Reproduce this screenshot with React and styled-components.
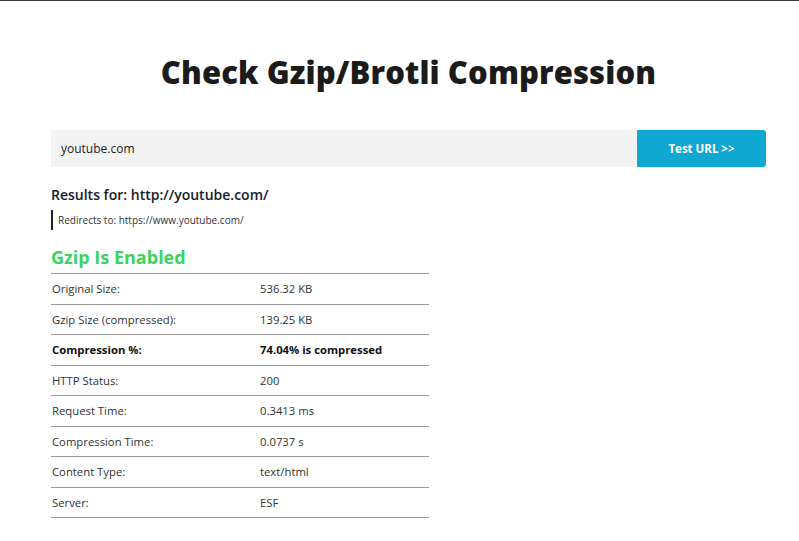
import React from "react";
import styled, { createGlobalStyle } from "styled-components";

const GlobalStyle = createGlobalStyle`
  html, body {
    margin: 0;
    padding: 0;
    background: #fff;
  }
  body {
    font-family: "Open Sans", "Liberation Sans", sans-serif;
    color: #222;
  }
`;

const rows = [
  { label: "Original Size:", value: "536.32 KB" },
  { label: "Gzip Size (compressed):", value: "139.25 KB" },
  { label: "Compression %:", value: "74.04% is compressed", strong: true },
  { label: "HTTP Status:", value: "200" },
  { label: "Request Time:", value: "0.3413 ms" },
  { label: "Compression Time:", value: "0.0737 s" },
  { label: "Content Type:", value: "text/html" },
  { label: "Server:", value: "ESF" },
];

export default function App() {
  return (
    <>
      <GlobalStyle />
      <Page>
        <Title>Check Gzip/Brotli Compression</Title>
        <SearchBar>
          <UrlInput defaultValue="youtube.com" />
          <TestButton>Test URL &gt;&gt;</TestButton>
        </SearchBar>
        <Results>
          <ResultsFor>Results for: http://youtube.com/</ResultsFor>
          <Redirect>Redirects to: https://www.youtube.com/</Redirect>
          <Status>Gzip Is Enabled</Status>
          <Table>
            {rows.map((r) => (
              <Row key={r.label} $strong={r.strong}>
                <Cell>{r.label}</Cell>
                <Cell>{r.value}</Cell>
              </Row>
            ))}
          </Table>
        </Results>
      </Page>
    </>
  );
}

const Page = styled.div`
  border-top: 1px solid #3a3a3a;
  padding: 49px 33px 0 51px;
  box-sizing: border-box;
  width: 799px;
`;

const Title = styled.h1`
  margin: 0 0 35px;
  text-align: center;
  font-size: 31px;
  line-height: 45px;
  font-weight: 800;
  color: #1b1b1b;
  letter-spacing: 0.1px;
`;

const SearchBar = styled.div`
  display: flex;
  height: 37px;
  width: 715px;
`;

const UrlInput = styled.input`
  flex: 1;
  border: none;
  outline: none;
  background: #f3f3f3;
  padding: 0 10px;
  font-family: inherit;
  font-size: 12px;
  color: #222;
`;

const TestButton = styled.button`
  width: 129px;
  border: none;
  border-radius: 0 3px 3px 0;
  background: #0fa8d3;
  color: #fff;
  font-family: inherit;
  font-weight: 700;
  font-size: 11.5px;
  cursor: pointer;
`;

const Results = styled.div`
  width: 378px;
  padding-top: 18px;
`;

const ResultsFor = styled.div`
  font-size: 14px;
  font-weight: 600;
  color: #15202b;
  line-height: 20px;
`;

const Redirect = styled.div`
  margin-top: 5px;
  border-left: 2px solid #222;
  padding-left: 5px;
  font-size: 10px;
  line-height: 20px;
  color: #333;
`;

const Status = styled.div`
  margin-top: 14px;
  font-size: 18px;
  font-weight: 700;
  color: #3cd35f;
  line-height: 26px;
  padding-bottom: 3px;
`;

const Table = styled.div`
  border-top: 1px solid #9a9a9a;
`;

const Row = styled.div`
  display: grid;
  grid-template-columns: 208px 1fr;
  height: 29.5px;
  align-items: center;
  border-bottom: 1px solid #9a9a9a;
  font-size: 11.3px;
  font-weight: ${(p) => (p.$strong ? 700 : 400)};
  color: ${(p) => (p.$strong ? "#111" : "#333")};
`;

const Cell = styled.div`
  padding-left: 1px;
`;
